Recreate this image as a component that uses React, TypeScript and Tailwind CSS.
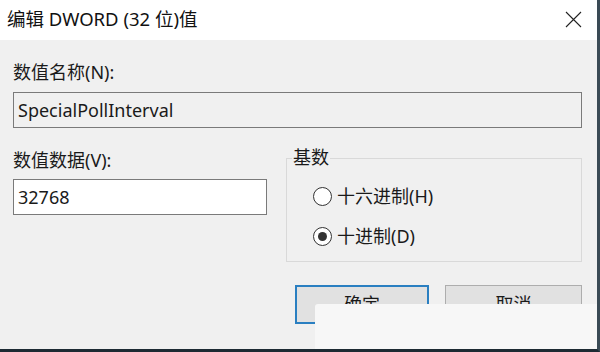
import React from "react";

const font = { fontFamily: '"Noto Sans", "Noto Sans CJK SC", sans-serif' };

function Radio({ checked, label }: { checked?: boolean; label: string }) {
  return (
    <div className="flex items-center gap-[5px] h-[20px]">
      <span className="w-[19px] h-[19px] rounded-full border border-[#333] bg-white flex items-center justify-center">
        {checked && <span className="w-[9px] h-[9px] rounded-full bg-[#333]" />}
      </span>
      <span className="text-[18px] text-[#1a1a1a] leading-none">{label}</span>
    </div>
  );
}

export default function App() {
  return (
    <div
      className="relative w-[600px] h-[352px] overflow-hidden bg-[#f0f0f0] border-r-[3px] border-r-[#3a4a55] border-b-[3px] border-b-[#1d2a33]"
      style={font}
    >
      {/* title bar */}
      <div className="h-[40px] bg-white flex items-center justify-between pl-[7px] pr-[15px]">
        <span className="text-[18.5px] text-[#111] leading-none pb-[2px]">编辑 DWORD (32 位)值</span>
        <svg width="17" height="17" viewBox="0 0 17 17" className="mt-[-2px]">
          <path d="M1 1 L16 16 M16 1 L1 16" stroke="#222" strokeWidth="1.1" />
        </svg>
      </div>

      <div className="pl-[13px] pr-[15px] pt-[23px]">
        <div className="text-[18px] text-[#1a1a1a] leading-none h-[29px]">数值名称(N):</div>
        <div className="h-[36px] border border-[#7a7a7a] bg-[#f0f0f0] flex items-center pl-[4px] text-[18px] text-[#1a1a1a]">
          SpecialPollInterval
        </div>

        <div className="flex mt-[20px]">
          <div className="w-[254px]">
            <div className="text-[18px] text-[#1a1a1a] leading-none h-[31px] pt-[3px]">数值数据(V):</div>
            <div className="h-[36px] border border-[#7a7a7a] bg-white flex items-center pl-[4px] text-[18px] text-[#1a1a1a]">
              32768
            </div>
          </div>

          <div className="ml-[19px] flex-1 relative">
            <div className="absolute left-[6px] top-0 bg-[#f0f0f0] px-[1px] text-[18px] text-[#1a1a1a] leading-none">基数</div>
            <div className="mt-[10px] h-[104px] border border-[#d9d9d9] pl-[26px] pt-[27px] flex flex-col gap-[20px]">
              <Radio label="十六进制(H)" />
              <Radio checked label="十进制(D)" />
            </div>
          </div>
        </div>

        <div className="flex justify-end gap-[16px] mt-[23px]">
          <button className="w-[134px] h-[39px] border-2 border-[#2a7fc1] bg-[#e1e1e1] text-[18px] text-[#1a1a1a]">确定</button>
          <button className="w-[137px] h-[38px] border border-[#adadad] bg-[#e1e1e1] text-[18px] text-[#1a1a1a]">取消</button>
        </div>
      </div>

      {/* watermark blur overlay */}
      <div className="absolute left-[315px] top-[304px] right-0 bottom-0 bg-[#f7f7f7] rounded-tl-[3px]" />
    </div>
  );
}
